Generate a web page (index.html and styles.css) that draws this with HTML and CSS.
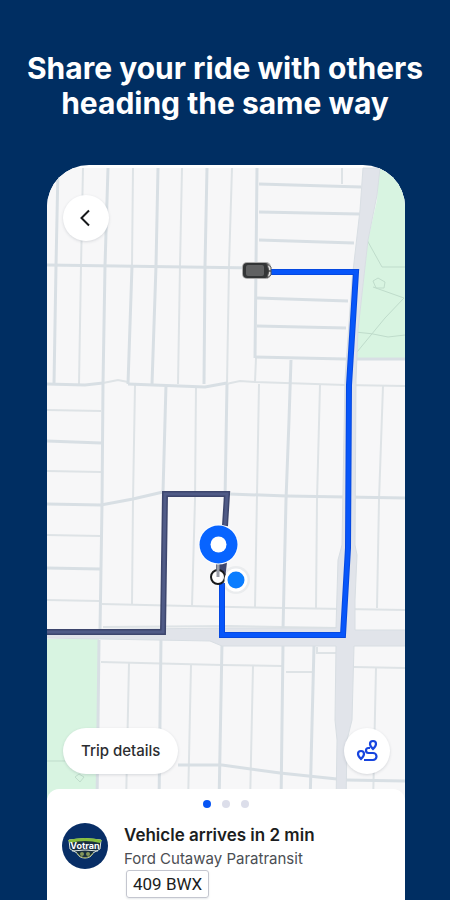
FILE: index.html
```html
<!DOCTYPE html>
<html lang="en">
<head>
<meta charset="utf-8">
<meta name="viewport" content="width=device-width, initial-scale=1">
<title>Share your ride</title>
<link rel="stylesheet" href="styles.css">
</head>
<body>
<header class="hero"><h1>Share your ride with others<br>heading the same way</h1></header>
<main class="phone">
  <section class="map-area" aria-label="Live map">
    <svg class="map" viewBox="47 165 358 640" aria-hidden="true">
      <rect x="47" y="168" width="358" height="640" fill="#f7f7f8"/>
      <!-- Parks -->
      <g fill="#d8f4e1">
        <path d="M379 168H405V358H355L359 320L368 240L377 200Z"/>
        <path d="M47 639H99L97 805H47Z"/>
      </g>
      <!-- Park footpaths -->
      <g class="footpath">
        <path d="M367 240L382 267H405M373 287L404 298L385 318L357 352M355 332Q372 333 388 337L405 335"/>
        <path d="M373 281L378 278L385 282L384 288L376 288Z"/>
        <path d="M47 761H97M75 777L79 774L84 777L80 782Z"/>
      </g>
      <!-- Minor streets -->
      <g class="minor">
        <path d="M83 168L81 266L79 384M133 168L132 266M182 168L180 266L178 384M232 168L229 266L227 384"/>
        <path d="M103 383L118 380L128 382M226 384L240 381L255 382L345 385L405 386M256 358L255 382M342 168V184"/>
        <path d="M47 410L101 411M47 471L101 472M47 535L100 536M47 600L99 601M102 604L232 607L405 610"/>
        <path d="M135 385L133 500L132 604M196 386L195 500L192 606M259 384L257 495L255 607M320 385L317 500L316 608M383 386L379 500L377 608"/>
        <path d="M103 627L230 626L338 628M101 662L222 665L282 666M286 672H312M354 667L405 668"/>
        <path d="M129 663L126 805M191 665L188 805M253 666L250 805M376 668L373 805M317 647V653H336"/>
      </g>
      <!-- Local streets -->
      <g class="local">
        <path d="M58 168L56 266L54 384M108 168L105 266L103 384L102 505L100 630M132 266L128 384M158 168L156 266L152 384M207 168L205 266L204 384"/>
        <path d="M257 168L256 266L255 358M47 265L257 268M47 384L85 385L103 383M128 384L205 387L227 383"/>
        <path d="M259 184L361 187M259 212L359 214M259 240L354 243M257 298L348 301M257 326L346 328M255 357L345 359H405"/>
        <path d="M291 360L289 420L286 500L283 630M166 385L163 492M227 384L225 500"/>
        <path d="M47 441L101 443M47 504L101 505L133 499L163 492M47 568L100 569M229 494L287 496L405 498"/>
        <path d="M99 640L97 805M161 638L159 805M222 643L219 805M283 645L281 805M314 646L310 805"/>
        <path d="M178 765H222L280 773L337 779M346 780L405 781"/>
      </g>
      <!-- Arterial roads -->
      <g fill="#e1e4ea" stroke="#d8dee3" stroke-width="1">
        <path d="M363 168H380L377 195L368 240L358 330L356 380L355 545L357 555L355 600V630H406V646H354L352 720L347 740L346 806H336L337 740L335 720L336 646H222L210 641L46 638V630L230 628H336L338 560L342 545L345 380L352 280L360 210Z"/>
      </g>
      <!-- Ride routes -->
      <g class="route">
        <path stroke="#3d466d" d="M47 632H163L165 494H227L225 526M219 560V580M224 562L222 580"/>
        <path stroke="#0649e0" d="M270 272H356L349 385L348 548L343 635H222V583"/>
        <path stroke="#0756fa" stroke-width="4" d="M270 272H356L349 385L348 548L343 635H222V583"/>
        <path stroke="#505b87" stroke-width="3" d="M47 632H163L165 494H227L225 526"/>
      </g>
      <!-- Vehicle -->
      <rect x="242" y="262" width="29" height="17" rx="5" fill="#aaa"/>
      <rect x="243" y="263" width="26" height="15" rx="4" fill="#333536"/>
      <rect x="246" y="265" width="18" height="11" rx="2" fill="#606162"/>
      <path d="M267 264L271 267V275L267 278L269 271Z" fill="#e3e3e3" stroke="#555" stroke-width="1"/>
      <path d="M268 271H271" stroke="#333" stroke-width="1"/>
      <!-- Pickup point and rider location -->
      <circle cx="218" cy="577" r="7" fill="#fff" stroke="#17191b" stroke-width="2"/>
      <path d="M218 563V577" stroke="#999da7" stroke-width="3"/>
      <circle cx="236" cy="580" r="14" fill="#8090a0" opacity=".1"/>
      <circle cx="236" cy="580" r="10" fill="#0a7dff" stroke="#fff" stroke-width="3"/>
      <circle cx="218.500" cy="544.500" r="20" fill="#fff"/>
      <circle cx="218.500" cy="544.500" r="19" fill="#0864ff"/>
      <circle cx="218.500" cy="544.500" r="8" fill="#fff"/>
    </svg>
    <div class="controls">
      <button class="round" aria-label="Back">
        <svg width="46" height="46" viewBox="0 0 46 46" aria-hidden="true"><path d="M26 15.500L18.500 23L26 30.500" fill="none" stroke="#17191b" stroke-width="2"/></svg>
      </button>
      <div class="bottom-controls">
        <button class="details">Trip details</button>
        <button class="round" aria-label="Show route">
          <svg width="46" height="46" viewBox="0 0 46 46" fill="none" stroke="#1745df" stroke-width="2.200" aria-hidden="true">
            <path d="M17 31C15 29 14 28 14 26A3 3 0 0 1 20 26C20 28 19 29 17 31ZM29 21C27 19 26 18 26 16A3 3 0 0 1 32 16C32 18 31 19 29 21Z"/>
            <path d="M26 20H24.500A2.500 2.500 0 0 0 24.500 25H29A3.500 3.500 0 0 1 29 32H20"/>
          </svg>
        </button>
      </div>
    </div>
  </section>
  <section class="sheet">
    <div class="dots" aria-hidden="true"><span class="dot active"></span><span class="dot"></span><span class="dot"></span></div>
    <div class="ride">
      <svg class="logo" width="46" height="46" viewBox="0 0 46 46" role="img" aria-label="Votran">
        <circle cx="23" cy="23" r="23" fill="#082e66"/>
        <path d="M7 17Q23 14 39 17L38 26L31 30Q29 35 23 35T15 30L8 26Z" fill="#182e3f" stroke="#dbe3db" stroke-width="1"/>
        <path d="M6 17Q23 13 40 17L38 20Q23 16 8 20Z" fill="#86bd3b"/>
        <path d="M10 28Q23 26 36 28" fill="none" stroke="#d9dfde" stroke-width="1"/>
        <path d="M15 30Q17 34 23 35Q29 34 31 30" fill="none" stroke="#8b984e" stroke-width="1"/>
        <circle cx="20" cy="31" r="2" fill="#86975b"/><circle cx="26" cy="31" r="2" fill="#86975b"/>
        <text class="logo-text" x="23" y="26" text-anchor="middle">Votran</text>
      </svg>
      <div class="info">
        <h2>Vehicle arrives in 2 min</h2>
        <p>Ford Cutaway Paratransit</p>
        <span class="plate">409 BWX</span>
      </div>
    </div>
  </section>
</main>
</body>
</html>
```
FILE: styles.css
```css
* { box-sizing: border-box; }
body {
  margin: 0;
  min-height: 100vh;
  display: flex;
  flex-direction: column;
  background: #002e62;
  color: #1b1d20;
  font-family: Inter, "Liberation Sans", sans-serif;
}
h1, h2, p { margin: 0; }
.hero {
  padding: 51px 8px 44px;
  color: #fff;
  text-align: center;
}
h1 {
  font-size: 30px;
  line-height: 35px;
  font-weight: 700;
  white-space: nowrap;
}
.phone {
  flex: 1;
  display: flex;
  flex-direction: column;
  margin: 0 45px 0 47px;
  border-radius: 42px 42px 0 0;
  overflow: hidden;
  background: #fff;
}
.map-area { display: grid; }
.map, .controls { grid-area: 1 / 1; }
.map { display: block; width: 100%; height: auto; }
.minor, .local, .footpath, .route { fill: none; }
.minor { stroke: #dee3e6; stroke-width: 2; }
.local { stroke: #d8dfe4; stroke-width: 3; }
.footpath { stroke: #bfdccb; stroke-width: 1; }
.route { stroke-width: 6; }
.controls {
  display: flex;
  flex-direction: column;
  justify-content: space-between;
  align-items: flex-start;
  padding: 30px 15px 31px 16px;
}
.bottom-controls {
  align-self: stretch;
  display: flex;
  justify-content: space-between;
}
button {
  border: 0;
  padding: 0;
  background: #fff;
  color: #2b2d30;
  font: 500 15px/24px Inter, "Liberation Sans", sans-serif;
  box-shadow: 0 1px 3px #3344552b;
  cursor: pointer;
}
.round { width: 46px; height: 46px; border-radius: 50%; }
.round svg { display: block; }
.details { height: 46px; padding: 0 18px; border-radius: 23px; }
.sheet {
  position: relative;
  flex: 1;
  margin-top: -16px;
  padding: 11px 15px 0;
  border-radius: 12px 12px 0 0;
  background: #fff;
}
.dots { display: flex; justify-content: center; gap: 11px; }
.dot { width: 8px; height: 8px; border-radius: 50%; background: #dcdeea; }
.dot.active { background: #0755f4; }
.ride { display: flex; gap: 16px; padding-top: 15px; }
.logo { flex: none; }
.logo-text { fill: #fff; font: 700 9px Inter, sans-serif; }
.info { display: flex; flex-direction: column; align-items: flex-start; }
h2 { font-size: 17px; line-height: 24px; font-weight: 600; }
p { font-size: 15px; line-height: 23px; color: #4b4e53; }
.plate {
  margin-left: 2px;
  padding: 0 6px;
  border: 1px solid #c4c6cf;
  border-radius: 3px;
  font: 400 17px/26px Roboto, sans-serif;
  box-shadow: 0 1px 2px #33445520;
}
```
